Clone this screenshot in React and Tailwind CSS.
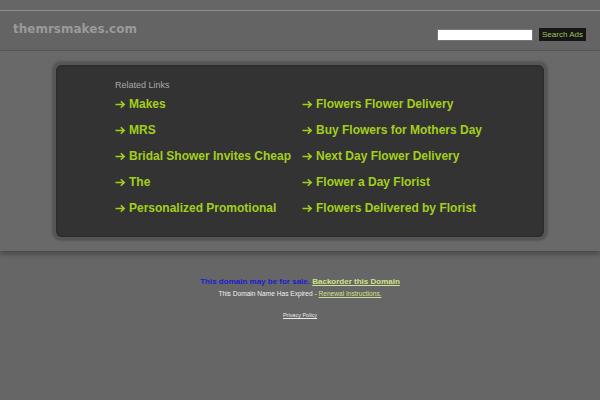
import React from "react";

const left = ["Makes", "MRS", "Bridal Shower Invites Cheap", "The", "Personalized Promotional"];
const right = [
  "Flowers Flower Delivery",
  "Buy Flowers for Mothers Day",
  "Next Day Flower Delivery",
  "Flower a Day Florist",
  "Flowers Delivered by Florist",
];

function Arrow() {
  return (
    <svg width="11" height="9" viewBox="0 0 11 9" className="shrink-0">
      <path d="M0.5 4.5 H9.2 M5.8 1.2 L9.2 4.5 L5.8 7.8" fill="none" stroke="#a3cf1c" strokeWidth="1.6" />
    </svg>
  );
}

function LinkItem({ text }) {
  return (
    <div className="h-[26px] flex items-center">
      <Arrow />
      <span className="ml-[3px] text-[12px] font-bold text-[#a3cf1c] whitespace-nowrap">{text}</span>
    </div>
  );
}

export default function App() {
  return (
    <div className="w-full h-[400px] bg-[#666666] overflow-hidden" style={{ fontFamily: '"Liberation Sans", Arial, sans-serif' }}>
      <div className="h-[10px]" />
      <div className="h-[41px] border-t border-[#8e8e8e] border-b border-b-[#575757] bg-[#646464] flex items-start justify-between pl-[13px] pr-[14px]">
        <div className="mt-[11px] text-[12px] leading-[15px] font-bold text-[#9a9a9a]" style={{ fontFamily: '"DejaVu Sans", Verdana, sans-serif' }}>
          themrsmakes.com
        </div>
        <div className="flex items-center mt-[17px]">
          <div className="w-[96px] h-[12px] bg-white border border-[#777]" />
          <div className="ml-[6px] w-[47px] h-[13px] bg-[#161616] text-[8px] text-[#9dc455] flex items-center justify-center">
            Search Ads
          </div>
        </div>
      </div>
      <div className="bg-[#696969] pt-[11px] pb-[11px] shadow-[0_3px_5px_rgba(0,0,0,0.3)] relative">
        <div className="w-[494px] mx-auto rounded-[8px] bg-[#565656] p-[3px] shadow-[0_0_3px_rgba(0,0,0,0.35)]">
          <div className="rounded-[6px] bg-[#333333] shadow-[inset_0_0_2px_rgba(0,0,0,0.6)] pl-[59px] pt-[15px] pb-[16px] h-[172px]">
            <div className="text-[9px] leading-[11px] text-[#a8a8a8]">Related Links</div>
            <div className="grid grid-cols-[187px_auto]">
              <div>
                {left.map((t) => (
                  <LinkItem key={t} text={t} />
                ))}
              </div>
              <div>
                {right.map((t) => (
                  <LinkItem key={t} text={t} />
                ))}
              </div>
            </div>
          </div>
        </div>
      </div>
      <div className="pt-[24px] flex flex-col items-center">
        <div className="text-[8px] leading-[13px] font-bold">
          <span className="text-[#1c1ccf]">This domain may be for sale. </span>
          <span className="text-[#cfe38a] underline">Backorder this Domain</span>
        </div>
        <div className="text-[6.6px] leading-[12px] text-[#f0f0f0]">
          This Domain Name Has Expired - <span className="text-[#cfe08e] underline">Renewal Instructions.</span>
        </div>
        <div className="mt-[9px] text-[5.5px] leading-[12px] text-[#e8e8e8] underline">Privacy Policy</div>
      </div>
    </div>
  );
}
